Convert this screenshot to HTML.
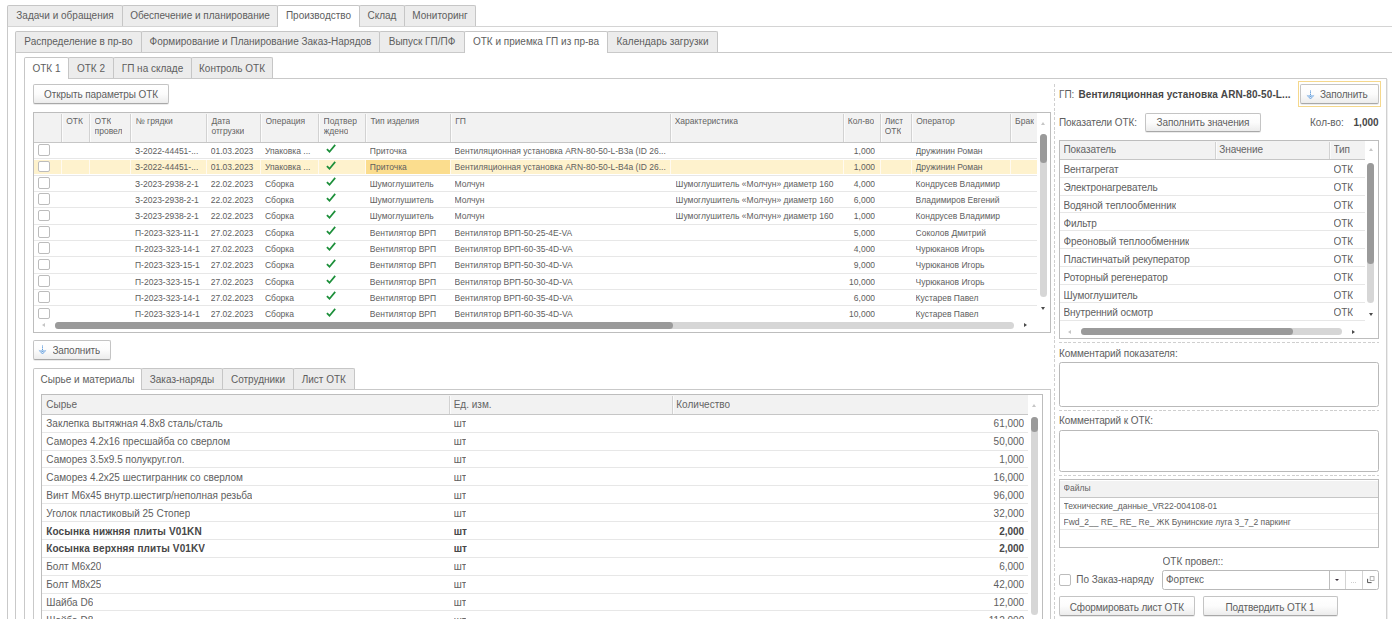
<!DOCTYPE html><html lang="ru"><head><meta charset="utf-8"><title>ОТК</title><style>
*{box-sizing:border-box;margin:0;padding:0}
html,body{width:1392px;height:619px;overflow:hidden;background:#fff}
body{font-family:"Liberation Sans",sans-serif;font-size:10px;color:#5e5e5e;position:relative}
.a{position:absolute}
.t{position:absolute;white-space:nowrap;line-height:12px;height:12px;overflow:hidden}
.s{font-size:8.5px}
.b{font-weight:bold;color:#474747}
.h{color:#646464}
.ln{position:absolute;background:#c9c9c9}
.tab{position:absolute;border:1px solid #c6c6c6;border-bottom:none;background:#ececec;border-radius:2px 2px 0 0}
.tab.act{background:#fff}
.btn{position:absolute;border:1px solid #c4c4c4;border-bottom-color:#a8a8a8;border-radius:2px;background:linear-gradient(#ffffff 0%,#fcfcfc 50%,#ececec 100%);box-shadow:0 1px 0 rgba(0,0,0,.08)}
.tbl{position:absolute;border:1px solid #bdbdbd;background:#fff}
.hd{position:absolute;background:#f2f2f2}
.vd{position:absolute;width:1px;background:#d2d2d2;box-shadow:1px 0 0 #fbfbfb}
.rl{position:absolute;height:1px;background:#e7e7e7}
.cb{position:absolute;border:1px solid #bcbcbc;border-radius:2px;background:#fff}
.dash-h{position:absolute;height:1px;background:repeating-linear-gradient(90deg,#cfcfcf 0,#cfcfcf 2.8px,transparent 2.8px,transparent 4.75px)}
.dash-v{position:absolute;width:1px;background:repeating-linear-gradient(180deg,#cfcfcf 0,#cfcfcf 2.8px,transparent 2.8px,transparent 4.75px)}
.ta{position:absolute;border:1px solid #b9b9b9;border-radius:2.5px;background:#fff}
.sb{position:absolute;border-radius:4px}
</style></head><body>
<div class="ln" style="left:7px;top:26px;width:1385px;height:1px;background:#d4d4d4"></div>
<div class="ln" style="left:7px;top:26px;width:1px;height:593px;background:#c9c9c9"></div>
<div class="tab" style="left:7.00px;top:5.00px;width:116.00px;height:21.00px;"></div>
<div class="tab" style="left:122.00px;top:5.00px;width:156.00px;height:21.00px;"></div>
<div class="tab act" style="left:277.00px;top:5.00px;width:83.00px;height:22.00px;z-index:2;"></div>
<div class="tab" style="left:359.00px;top:5.00px;width:46.00px;height:21.00px;"></div>
<div class="tab" style="left:404.00px;top:5.00px;width:72.00px;height:21.00px;"></div>
<div class="t" style="top:9.75px;left:7.50px;width:115.00px;text-align:center;z-index:3;">Задачи и обращения</div>
<div class="t" style="top:9.75px;left:122.50px;width:155.00px;text-align:center;z-index:3;">Обеспечение и планирование</div>
<div class="t" style="top:9.75px;left:277.50px;width:82.00px;text-align:center;z-index:3;">Производство</div>
<div class="t" style="top:9.75px;left:359.50px;width:45.00px;text-align:center;z-index:3;">Склад</div>
<div class="t" style="top:9.75px;left:404.50px;width:71.00px;text-align:center;z-index:3;">Мониторинг</div>
<div class="ln" style="left:15px;top:52px;width:1377px;height:1px;background:#c9c9c9"></div>
<div class="ln" style="left:15px;top:52px;width:1px;height:567px;background:#c9c9c9"></div>
<div class="tab" style="left:15.00px;top:31.00px;width:127.00px;height:21.00px;"></div>
<div class="tab" style="left:141.00px;top:31.00px;width:239.00px;height:21.00px;"></div>
<div class="tab" style="left:379.00px;top:31.00px;width:86.00px;height:21.00px;"></div>
<div class="tab act" style="left:464.00px;top:31.00px;width:144.00px;height:22.00px;z-index:2;"></div>
<div class="tab" style="left:607.00px;top:31.00px;width:111.00px;height:21.00px;"></div>
<div class="t" style="top:35.75px;left:15.50px;width:126.00px;text-align:center;z-index:3;">Распределение в пр-во</div>
<div class="t" style="top:35.75px;left:141.50px;width:238.00px;text-align:center;z-index:3;">Формирование и Планирование Заказ-Нарядов</div>
<div class="t" style="top:35.75px;left:379.50px;width:85.00px;text-align:center;z-index:3;">Выпуск ГП/ПФ</div>
<div class="t" style="top:35.75px;left:464.50px;width:143.00px;text-align:center;z-index:3;">ОТК и приемка ГП из пр-ва</div>
<div class="t" style="top:35.75px;left:607.50px;width:110.00px;text-align:center;z-index:3;">Календарь загрузки</div>
<div class="ln" style="left:24px;top:78px;width:1363px;height:1px;background:#c9c9c9"></div>
<div class="ln" style="left:24px;top:78px;width:1px;height:541px;background:#c9c9c9"></div>
<div class="ln" style="left:1386px;top:78px;width:1px;height:541px;background:#d0d0d0"></div>
<div class="ln" style="left:1387px;top:79px;width:1px;height:540px;background:#ededed"></div>
<div class="tab act" style="left:24.00px;top:57.00px;width:45.00px;height:22.00px;z-index:2;"></div>
<div class="tab" style="left:68.00px;top:57.00px;width:46.00px;height:21.00px;"></div>
<div class="tab" style="left:113.00px;top:57.00px;width:79.00px;height:21.00px;"></div>
<div class="tab" style="left:191.00px;top:57.00px;width:82.00px;height:21.00px;"></div>
<div class="t" style="top:62.75px;left:24.50px;width:44.00px;text-align:center;z-index:3;">ОТК 1</div>
<div class="t" style="top:62.75px;left:68.50px;width:45.00px;text-align:center;z-index:3;">ОТК 2</div>
<div class="t" style="top:62.75px;left:113.50px;width:78.00px;text-align:center;z-index:3;">ГП на складе</div>
<div class="t" style="top:62.75px;left:191.50px;width:81.00px;text-align:center;z-index:3;">Контроль ОТК</div>
<div class="btn" style="left:33.00px;top:84.40px;width:136.00px;height:19.60px;"></div>
<div class="t" style="top:88.75px;left:-49.00px;width:300.00px;text-align:center;letter-spacing:-0.1px;">Открыть параметры ОТК</div>
<div class="tbl" style="left:33.00px;top:112.00px;width:1018.00px;height:221.00px;"></div>
<div class="hd" style="left:34.00px;top:113.00px;width:1003.40px;height:29.40px;"></div>
<div class="ln" style="left:34px;top:142px;width:1003.4000000000001px;height:1px;background:#c6c6c6"></div>
<div class="vd" style="left:61.00px;top:114.00px;width:1.00px;height:27.90px;"></div>
<div class="t s h" style="top:115.25px;left:66.20px;">ОТК</div>
<div class="vd" style="left:89.40px;top:114.00px;width:1.00px;height:27.90px;"></div>
<div class="t s h" style="top:115.25px;left:94.60px;">ОТК</div>
<div class="t s h" style="top:125.25px;left:94.60px;">провел</div>
<div class="vd" style="left:130.40px;top:114.00px;width:1.00px;height:27.90px;"></div>
<div class="t s h" style="top:115.25px;left:135.60px;">№ грядки</div>
<div class="vd" style="left:206.20px;top:114.00px;width:1.00px;height:27.90px;"></div>
<div class="t s h" style="top:115.25px;left:211.40px;">Дата</div>
<div class="t s h" style="top:125.25px;left:211.40px;">отгрузки</div>
<div class="vd" style="left:260.30px;top:114.00px;width:1.00px;height:27.90px;"></div>
<div class="t s h" style="top:115.25px;left:265.50px;">Операция</div>
<div class="vd" style="left:318.40px;top:114.00px;width:1.00px;height:27.90px;"></div>
<div class="t s h" style="top:115.25px;left:323.60px;">Подтвер</div>
<div class="t s h" style="top:125.25px;left:323.60px;">ждено</div>
<div class="vd" style="left:365.20px;top:114.00px;width:1.00px;height:27.90px;"></div>
<div class="t s h" style="top:115.25px;left:370.40px;">Тип изделия</div>
<div class="vd" style="left:450.00px;top:114.00px;width:1.00px;height:27.90px;"></div>
<div class="t s h" style="top:115.25px;left:455.20px;">ГП</div>
<div class="vd" style="left:669.50px;top:114.00px;width:1.00px;height:27.90px;"></div>
<div class="t s h" style="top:115.25px;left:674.70px;">Характеристика</div>
<div class="vd" style="left:842.50px;top:114.00px;width:1.00px;height:27.90px;"></div>
<div class="t s h" style="top:115.25px;left:847.70px;">Кол-во</div>
<div class="vd" style="left:879.50px;top:114.00px;width:1.00px;height:27.90px;"></div>
<div class="t s h" style="top:115.25px;left:884.70px;">Лист</div>
<div class="t s h" style="top:125.25px;left:884.70px;">ОТК</div>
<div class="vd" style="left:911.00px;top:114.00px;width:1.00px;height:27.90px;"></div>
<div class="t s h" style="top:115.25px;left:916.20px;">Оператор</div>
<div class="vd" style="left:1009.90px;top:114.00px;width:1.00px;height:27.90px;"></div>
<div class="t s h" style="top:115.25px;left:1015.10px;">Брак</div>
<div class="rl" style="left:34px;top:158px;width:1003.4px"></div>
<div class="cb" style="left:38.00px;top:144.26px;width:12.00px;height:11.90px;"></div>
<div class="t s" style="top:145.25px;left:135.00px;width:70.30px;">З-2022-44451-...</div>
<div class="t s" style="top:145.25px;left:210.80px;width:48.60px;">01.03.2023</div>
<div class="t s" style="top:145.25px;left:264.90px;width:52.60px;">Упаковка ...</div>
<div class="t s" style="top:145.25px;left:369.80px;width:79.30px;">Приточка</div>
<div class="t s" style="top:145.25px;left:454.60px;width:214.00px;">Вентиляционная установка ARN-80-50-L-B3a (ID 26...</div>
<div class="t s" style="top:145.25px;left:843.10px;width:32.00px;text-align:right;">1,000</div>
<div class="t s" style="top:145.25px;left:915.60px;width:93.40px;">Дружинин Роман</div>
<svg class="a" style="left:325.60px;top:144.26px" width="10" height="9" viewBox="0 0 10 9"><path d="M0.9 5.1 L3.5 7.7 L9.2 0.9" fill="none" stroke="#1c8f3a" stroke-width="1.7"/></svg>
<div class="a" style="left:34.00px;top:160.00px;width:1003.40px;height:14.00px;background:#fef2cd;"></div>
<div class="a" style="left:61.00px;top:160.00px;width:1.00px;height:14.00px;background:#fffaf0;"></div>
<div class="a" style="left:89.40px;top:160.00px;width:1.00px;height:14.00px;background:#fffaf0;"></div>
<div class="a" style="left:130.40px;top:160.00px;width:1.00px;height:14.00px;background:#fffaf0;"></div>
<div class="a" style="left:206.20px;top:160.00px;width:1.00px;height:14.00px;background:#fffaf0;"></div>
<div class="a" style="left:260.30px;top:160.00px;width:1.00px;height:14.00px;background:#fffaf0;"></div>
<div class="a" style="left:318.40px;top:160.00px;width:1.00px;height:14.00px;background:#fffaf0;"></div>
<div class="a" style="left:365.20px;top:160.00px;width:1.00px;height:14.00px;background:#fffaf0;"></div>
<div class="a" style="left:450.00px;top:160.00px;width:1.00px;height:14.00px;background:#fffaf0;"></div>
<div class="a" style="left:669.50px;top:160.00px;width:1.00px;height:14.00px;background:#fffaf0;"></div>
<div class="a" style="left:842.50px;top:160.00px;width:1.00px;height:14.00px;background:#fffaf0;"></div>
<div class="a" style="left:879.50px;top:160.00px;width:1.00px;height:14.00px;background:#fffaf0;"></div>
<div class="a" style="left:911.00px;top:160.00px;width:1.00px;height:14.00px;background:#fffaf0;"></div>
<div class="a" style="left:1009.90px;top:160.00px;width:1.00px;height:14.00px;background:#fffaf0;"></div>
<div class="a" style="left:366.20px;top:160.00px;width:83.80px;height:14.00px;background:#fbdd8e;"></div>
<div class="rl" style="left:34px;top:175px;width:1003.4px"></div>
<div class="cb" style="left:38.00px;top:160.59px;width:12.00px;height:11.90px;"></div>
<div class="t s" style="top:161.25px;left:135.00px;width:70.30px;">З-2022-44451-...</div>
<div class="t s" style="top:161.25px;left:210.80px;width:48.60px;">01.03.2023</div>
<div class="t s" style="top:161.25px;left:264.90px;width:52.60px;">Упаковка ...</div>
<div class="t s" style="top:161.25px;left:369.80px;width:79.30px;">Приточка</div>
<div class="t s" style="top:161.25px;left:454.60px;width:214.00px;">Вентиляционная установка ARN-80-50-L-B4a (ID 26...</div>
<div class="t s" style="top:161.25px;left:843.10px;width:32.00px;text-align:right;">1,000</div>
<div class="t s" style="top:161.25px;left:915.60px;width:93.40px;">Дружинин Роман</div>
<svg class="a" style="left:325.60px;top:160.59px" width="10" height="9" viewBox="0 0 10 9"><path d="M0.9 5.1 L3.5 7.7 L9.2 0.9" fill="none" stroke="#1c8f3a" stroke-width="1.7"/></svg>
<div class="rl" style="left:34px;top:191px;width:1003.4px"></div>
<div class="cb" style="left:38.00px;top:176.92px;width:12.00px;height:11.90px;"></div>
<div class="t s" style="top:178.25px;left:135.00px;width:70.30px;">З-2023-2938-2-1</div>
<div class="t s" style="top:178.25px;left:210.80px;width:48.60px;">22.02.2023</div>
<div class="t s" style="top:178.25px;left:264.90px;width:52.60px;">Сборка</div>
<div class="t s" style="top:178.25px;left:369.80px;width:79.30px;">Шумоглушитель</div>
<div class="t s" style="top:178.25px;left:454.60px;width:214.00px;">Молчун</div>
<div class="t s" style="top:178.25px;left:675.60px;width:167.50px;">Шумоглушитель «Молчун» диаметр 160</div>
<div class="t s" style="top:178.25px;left:843.10px;width:32.00px;text-align:right;">4,000</div>
<div class="t s" style="top:178.25px;left:915.60px;width:93.40px;">Кондрусев Владимир</div>
<svg class="a" style="left:325.60px;top:176.92px" width="10" height="9" viewBox="0 0 10 9"><path d="M0.9 5.1 L3.5 7.7 L9.2 0.9" fill="none" stroke="#1c8f3a" stroke-width="1.7"/></svg>
<div class="rl" style="left:34px;top:207px;width:1003.4px"></div>
<div class="cb" style="left:38.00px;top:193.25px;width:12.00px;height:11.90px;"></div>
<div class="t s" style="top:194.25px;left:135.00px;width:70.30px;">З-2023-2938-2-1</div>
<div class="t s" style="top:194.25px;left:210.80px;width:48.60px;">22.02.2023</div>
<div class="t s" style="top:194.25px;left:264.90px;width:52.60px;">Сборка</div>
<div class="t s" style="top:194.25px;left:369.80px;width:79.30px;">Шумоглушитель</div>
<div class="t s" style="top:194.25px;left:454.60px;width:214.00px;">Молчун</div>
<div class="t s" style="top:194.25px;left:675.60px;width:167.50px;">Шумоглушитель «Молчун» диаметр 160</div>
<div class="t s" style="top:194.25px;left:843.10px;width:32.00px;text-align:right;">6,000</div>
<div class="t s" style="top:194.25px;left:915.60px;width:93.40px;">Владимиров Евгений</div>
<svg class="a" style="left:325.60px;top:193.25px" width="10" height="9" viewBox="0 0 10 9"><path d="M0.9 5.1 L3.5 7.7 L9.2 0.9" fill="none" stroke="#1c8f3a" stroke-width="1.7"/></svg>
<div class="rl" style="left:34px;top:224px;width:1003.4px"></div>
<div class="cb" style="left:38.00px;top:209.58px;width:12.00px;height:11.90px;"></div>
<div class="t s" style="top:210.25px;left:135.00px;width:70.30px;">З-2023-2938-2-1</div>
<div class="t s" style="top:210.25px;left:210.80px;width:48.60px;">22.02.2023</div>
<div class="t s" style="top:210.25px;left:264.90px;width:52.60px;">Сборка</div>
<div class="t s" style="top:210.25px;left:369.80px;width:79.30px;">Шумоглушитель</div>
<div class="t s" style="top:210.25px;left:454.60px;width:214.00px;">Молчун</div>
<div class="t s" style="top:210.25px;left:675.60px;width:167.50px;">Шумоглушитель «Молчун» диаметр 160</div>
<div class="t s" style="top:210.25px;left:843.10px;width:32.00px;text-align:right;">1,000</div>
<div class="t s" style="top:210.25px;left:915.60px;width:93.40px;">Кондрусев Владимир</div>
<svg class="a" style="left:325.60px;top:209.58px" width="10" height="9" viewBox="0 0 10 9"><path d="M0.9 5.1 L3.5 7.7 L9.2 0.9" fill="none" stroke="#1c8f3a" stroke-width="1.7"/></svg>
<div class="rl" style="left:34px;top:240px;width:1003.4px"></div>
<div class="cb" style="left:38.00px;top:225.91px;width:12.00px;height:11.90px;"></div>
<div class="t s" style="top:227.25px;left:135.00px;width:70.30px;">П-2023-323-11-1</div>
<div class="t s" style="top:227.25px;left:210.80px;width:48.60px;">27.02.2023</div>
<div class="t s" style="top:227.25px;left:264.90px;width:52.60px;">Сборка</div>
<div class="t s" style="top:227.25px;left:369.80px;width:79.30px;">Вентилятор ВРП</div>
<div class="t s" style="top:227.25px;left:454.60px;width:214.00px;">Вентилятор ВРП-50-25-4E-VA</div>
<div class="t s" style="top:227.25px;left:843.10px;width:32.00px;text-align:right;">5,000</div>
<div class="t s" style="top:227.25px;left:915.60px;width:93.40px;">Соколов Дмитрий</div>
<svg class="a" style="left:325.60px;top:225.91px" width="10" height="9" viewBox="0 0 10 9"><path d="M0.9 5.1 L3.5 7.7 L9.2 0.9" fill="none" stroke="#1c8f3a" stroke-width="1.7"/></svg>
<div class="rl" style="left:34px;top:256px;width:1003.4px"></div>
<div class="cb" style="left:38.00px;top:242.24px;width:12.00px;height:11.90px;"></div>
<div class="t s" style="top:243.25px;left:135.00px;width:70.30px;">П-2023-323-14-1</div>
<div class="t s" style="top:243.25px;left:210.80px;width:48.60px;">27.02.2023</div>
<div class="t s" style="top:243.25px;left:264.90px;width:52.60px;">Сборка</div>
<div class="t s" style="top:243.25px;left:369.80px;width:79.30px;">Вентилятор ВРП</div>
<div class="t s" style="top:243.25px;left:454.60px;width:214.00px;">Вентилятор ВРП-60-35-4D-VA</div>
<div class="t s" style="top:243.25px;left:843.10px;width:32.00px;text-align:right;">4,000</div>
<div class="t s" style="top:243.25px;left:915.60px;width:93.40px;">Чурюканов Игорь</div>
<svg class="a" style="left:325.60px;top:242.24px" width="10" height="9" viewBox="0 0 10 9"><path d="M0.9 5.1 L3.5 7.7 L9.2 0.9" fill="none" stroke="#1c8f3a" stroke-width="1.7"/></svg>
<div class="rl" style="left:34px;top:273px;width:1003.4px"></div>
<div class="cb" style="left:38.00px;top:258.57px;width:12.00px;height:11.90px;"></div>
<div class="t s" style="top:259.25px;left:135.00px;width:70.30px;">П-2023-323-15-1</div>
<div class="t s" style="top:259.25px;left:210.80px;width:48.60px;">27.02.2023</div>
<div class="t s" style="top:259.25px;left:264.90px;width:52.60px;">Сборка</div>
<div class="t s" style="top:259.25px;left:369.80px;width:79.30px;">Вентилятор ВРП</div>
<div class="t s" style="top:259.25px;left:454.60px;width:214.00px;">Вентилятор ВРП-50-30-4D-VA</div>
<div class="t s" style="top:259.25px;left:843.10px;width:32.00px;text-align:right;">9,000</div>
<div class="t s" style="top:259.25px;left:915.60px;width:93.40px;">Чурюканов Игорь</div>
<svg class="a" style="left:325.60px;top:258.57px" width="10" height="9" viewBox="0 0 10 9"><path d="M0.9 5.1 L3.5 7.7 L9.2 0.9" fill="none" stroke="#1c8f3a" stroke-width="1.7"/></svg>
<div class="rl" style="left:34px;top:289px;width:1003.4px"></div>
<div class="cb" style="left:38.00px;top:274.90px;width:12.00px;height:11.90px;"></div>
<div class="t s" style="top:276.25px;left:135.00px;width:70.30px;">П-2023-323-15-1</div>
<div class="t s" style="top:276.25px;left:210.80px;width:48.60px;">27.02.2023</div>
<div class="t s" style="top:276.25px;left:264.90px;width:52.60px;">Сборка</div>
<div class="t s" style="top:276.25px;left:369.80px;width:79.30px;">Вентилятор ВРП</div>
<div class="t s" style="top:276.25px;left:454.60px;width:214.00px;">Вентилятор ВРП-50-30-4D-VA</div>
<div class="t s" style="top:276.25px;left:843.10px;width:32.00px;text-align:right;">10,000</div>
<div class="t s" style="top:276.25px;left:915.60px;width:93.40px;">Чурюканов Игорь</div>
<svg class="a" style="left:325.60px;top:274.90px" width="10" height="9" viewBox="0 0 10 9"><path d="M0.9 5.1 L3.5 7.7 L9.2 0.9" fill="none" stroke="#1c8f3a" stroke-width="1.7"/></svg>
<div class="rl" style="left:34px;top:305px;width:1003.4px"></div>
<div class="cb" style="left:38.00px;top:291.23px;width:12.00px;height:11.90px;"></div>
<div class="t s" style="top:292.25px;left:135.00px;width:70.30px;">П-2023-323-14-1</div>
<div class="t s" style="top:292.25px;left:210.80px;width:48.60px;">27.02.2023</div>
<div class="t s" style="top:292.25px;left:264.90px;width:52.60px;">Сборка</div>
<div class="t s" style="top:292.25px;left:369.80px;width:79.30px;">Вентилятор ВРП</div>
<div class="t s" style="top:292.25px;left:454.60px;width:214.00px;">Вентилятор ВРП-60-35-4D-VA</div>
<div class="t s" style="top:292.25px;left:843.10px;width:32.00px;text-align:right;">6,000</div>
<div class="t s" style="top:292.25px;left:915.60px;width:93.40px;">Кустарев Павел</div>
<svg class="a" style="left:325.60px;top:291.23px" width="10" height="9" viewBox="0 0 10 9"><path d="M0.9 5.1 L3.5 7.7 L9.2 0.9" fill="none" stroke="#1c8f3a" stroke-width="1.7"/></svg>
<div class="cb" style="left:38.00px;top:307.56px;width:12.00px;height:11.90px;"></div>
<div class="t s" style="top:308.25px;left:135.00px;width:70.30px;">П-2023-323-14-1</div>
<div class="t s" style="top:308.25px;left:210.80px;width:48.60px;">27.02.2023</div>
<div class="t s" style="top:308.25px;left:264.90px;width:52.60px;">Сборка</div>
<div class="t s" style="top:308.25px;left:369.80px;width:79.30px;">Вентилятор ВРП</div>
<div class="t s" style="top:308.25px;left:454.60px;width:214.00px;">Вентилятор ВРП-60-35-4D-VA</div>
<div class="t s" style="top:308.25px;left:843.10px;width:32.00px;text-align:right;">10,000</div>
<div class="t s" style="top:308.25px;left:915.60px;width:93.40px;">Кустарев Павел</div>
<svg class="a" style="left:325.60px;top:307.56px" width="10" height="9" viewBox="0 0 10 9"><path d="M0.9 5.1 L3.5 7.7 L9.2 0.9" fill="none" stroke="#1c8f3a" stroke-width="1.7"/></svg>
<div class="a" style="left:1041.30px;top:121.50px;border-left:2.2px solid transparent;border-right:2.2px solid transparent;border-bottom:3.8px solid #c6c6c6"></div>
<div class="sb" style="left:1039.70px;top:134.30px;width:7.30px;height:162.70px;background:#d6d6d6"></div>
<div class="sb" style="left:1039.70px;top:134.30px;width:7.30px;height:28.70px;background:#9a9a9a"></div>
<div class="a" style="left:1041.30px;top:306.80px;border-left:2.2px solid transparent;border-right:2.2px solid transparent;border-top:3.8px solid #4a4a4a"></div>
<div class="sb" style="left:55.00px;top:321.70px;width:959.30px;height:7.10px;background:#d6d6d6"></div>
<div class="sb" style="left:55.00px;top:321.70px;width:617.50px;height:7.10px;background:#9a9a9a"></div>
<div class="a" style="left:42.10px;top:323.10px;border-top:2.2px solid transparent;border-bottom:2.2px solid transparent;border-right:3.8px solid #c6c6c6"></div>
<div class="a" style="left:1023.60px;top:323.10px;border-top:2.2px solid transparent;border-bottom:2.2px solid transparent;border-left:3.8px solid #4a4a4a"></div>
<div class="btn" style="left:33.00px;top:340.40px;width:78.00px;height:20.00px;"></div>
<svg class="a" style="left:38.00px;top:345.30px" width="9" height="10" viewBox="0 0 9 10"><path d="M4.5 0.5 V6.6" fill="none" stroke="#4a90d9" stroke-width="0.9" stroke-dasharray="1.1 0.6"/><path d="M2.6 5 L4.5 7.1 L6.4 5" fill="none" stroke="#4a90d9" stroke-width="0.85"/><path d="M0.9 5.4 Q2.8 6.6 4.5 9 Q6.2 6.6 8.1 5.4" fill="none" stroke="#5a9be0" stroke-width="0.8"/></svg>
<div class="t" style="top:344.75px;left:52.50px;letter-spacing:-0.17px;">Заполнить</div>
<div class="ln" style="left:33px;top:389px;width:1018px;height:1px;background:#c9c9c9"></div>
<div class="ln" style="left:33px;top:389px;width:1px;height:230px;background:#c9c9c9"></div>
<div class="ln" style="left:1050px;top:389px;width:1px;height:230px;background:#c9c9c9"></div>
<div class="tab act" style="left:33.00px;top:368.00px;width:109.00px;height:22.00px;z-index:2;"></div>
<div class="tab" style="left:141.00px;top:368.00px;width:82.00px;height:21.00px;"></div>
<div class="tab" style="left:222.00px;top:368.00px;width:72.00px;height:21.00px;"></div>
<div class="tab" style="left:293.00px;top:368.00px;width:61.50px;height:21.00px;"></div>
<div class="t" style="top:373.75px;left:33.50px;width:108.00px;text-align:center;z-index:3;">Сырье и материалы</div>
<div class="t" style="top:373.75px;left:141.50px;width:81.00px;text-align:center;z-index:3;">Заказ-наряды</div>
<div class="t" style="top:373.75px;left:222.50px;width:71.00px;text-align:center;z-index:3;">Сотрудники</div>
<div class="t" style="top:373.75px;left:293.50px;width:60.50px;text-align:center;z-index:3;">Лист ОТК</div>
<div class="tbl" style="left:41.00px;top:394.00px;width:1002.00px;height:246.00px;"></div>
<div class="hd" style="left:42.00px;top:395.00px;width:986.40px;height:19.30px;"></div>
<div class="ln" style="left:42px;top:414px;width:986.4000000000001px;height:1px;background:#c6c6c6"></div>
<div class="vd" style="left:449.25px;top:396.00px;width:1.00px;height:17.80px;"></div>
<div class="vd" style="left:671.75px;top:396.00px;width:1.00px;height:17.80px;"></div>
<div class="t h" style="top:398.75px;left:46.30px;">Сырье</div>
<div class="t h" style="top:398.75px;left:453.70px;">Ед. изм.</div>
<div class="t h" style="top:398.75px;left:676.30px;">Количество</div>
<div class="rl" style="left:42px;top:432px;width:986.4px"></div>
<div class="t" style="top:417.75px;left:46.30px;">Заклепка вытяжная 4.8х8 сталь/сталь</div>
<div class="t" style="top:417.75px;left:453.70px;">шт</div>
<div class="t" style="top:417.75px;left:904.20px;width:120.00px;text-align:right;">61,000</div>
<div class="rl" style="left:42px;top:450px;width:986.4px"></div>
<div class="t" style="top:435.75px;left:46.30px;">Саморез 4.2х16 пресшайба со сверлом</div>
<div class="t" style="top:435.75px;left:453.70px;">шт</div>
<div class="t" style="top:435.75px;left:904.20px;width:120.00px;text-align:right;">50,000</div>
<div class="rl" style="left:42px;top:467px;width:986.4px"></div>
<div class="t" style="top:453.75px;left:46.30px;">Саморез 3.5х9.5 полукруг.гол.</div>
<div class="t" style="top:453.75px;left:453.70px;">шт</div>
<div class="t" style="top:453.75px;left:904.20px;width:120.00px;text-align:right;">1,000</div>
<div class="rl" style="left:42px;top:485px;width:986.4px"></div>
<div class="t" style="top:471.75px;left:46.30px;">Саморез 4.2х25 шестигранник со сверлом</div>
<div class="t" style="top:471.75px;left:453.70px;">шт</div>
<div class="t" style="top:471.75px;left:904.20px;width:120.00px;text-align:right;">16,000</div>
<div class="rl" style="left:42px;top:503px;width:986.4px"></div>
<div class="t" style="top:489.75px;left:46.30px;">Винт М6х45 внутр.шестигр/неполная резьба</div>
<div class="t" style="top:489.75px;left:453.70px;">шт</div>
<div class="t" style="top:489.75px;left:904.20px;width:120.00px;text-align:right;">96,000</div>
<div class="rl" style="left:42px;top:521px;width:986.4px"></div>
<div class="t" style="top:507.75px;left:46.30px;">Уголок пластиковый 25 Стопер</div>
<div class="t" style="top:507.75px;left:453.70px;">шт</div>
<div class="t" style="top:507.75px;left:904.20px;width:120.00px;text-align:right;">32,000</div>
<div class="rl" style="left:42px;top:539px;width:986.4px"></div>
<div class="t b" style="top:525.75px;left:46.30px;letter-spacing:0.12px;">Косынка нижняя плиты V01KN</div>
<div class="t b" style="top:525.75px;left:453.70px;">шт</div>
<div class="t b" style="top:525.75px;left:904.20px;width:120.00px;text-align:right;">2,000</div>
<div class="rl" style="left:42px;top:557px;width:986.4px"></div>
<div class="t b" style="top:542.75px;left:46.30px;letter-spacing:0.12px;">Косынка верхняя плиты V01KV</div>
<div class="t b" style="top:542.75px;left:453.70px;">шт</div>
<div class="t b" style="top:542.75px;left:904.20px;width:120.00px;text-align:right;">2,000</div>
<div class="rl" style="left:42px;top:575px;width:986.4px"></div>
<div class="t" style="top:560.75px;left:46.30px;">Болт М6х20</div>
<div class="t" style="top:560.75px;left:453.70px;">шт</div>
<div class="t" style="top:560.75px;left:904.20px;width:120.00px;text-align:right;">6,000</div>
<div class="rl" style="left:42px;top:593px;width:986.4px"></div>
<div class="t" style="top:578.75px;left:46.30px;">Болт М8х25</div>
<div class="t" style="top:578.75px;left:453.70px;">шт</div>
<div class="t" style="top:578.75px;left:904.20px;width:120.00px;text-align:right;">42,000</div>
<div class="rl" style="left:42px;top:610px;width:986.4px"></div>
<div class="t" style="top:596.75px;left:46.30px;">Шайба D6</div>
<div class="t" style="top:596.75px;left:453.70px;">шт</div>
<div class="t" style="top:596.75px;left:904.20px;width:120.00px;text-align:right;">12,000</div>
<div class="rl" style="left:42px;top:628px;width:986.4px"></div>
<div class="t" style="top:614.75px;left:46.30px;">Шайба D8</div>
<div class="t" style="top:614.75px;left:453.70px;">шт</div>
<div class="t" style="top:614.75px;left:904.20px;width:120.00px;text-align:right;">112,000</div>
<div class="a" style="left:1032.00px;top:403.60px;border-left:2.2px solid transparent;border-right:2.2px solid transparent;border-bottom:3.8px solid #c6c6c6"></div>
<div class="sb" style="left:1030.80px;top:416.50px;width:6.80px;height:198.50px;background:#d6d6d6"></div>
<div class="sb" style="left:1030.80px;top:416.50px;width:6.80px;height:15.00px;background:#9a9a9a"></div>
<div class="dash-v" style="left:1054.00px;top:84.00px;width:1.00px;height:535.00px;"></div>
<div class="t" style="top:88.75px;left:1059.00px;">ГП:</div>
<div class="t b" style="top:88.75px;left:1078.40px;letter-spacing:0.11px;">Вентиляционная установка ARN-80-50-L...</div>
<div class="a" style="left:1298.00px;top:81.00px;width:83.00px;height:26.00px;border:1px solid #f5d88c;"></div>
<div class="btn" style="left:1300.00px;top:84.40px;width:79.00px;height:19.60px;"></div>
<svg class="a" style="left:1305.80px;top:89.50px" width="9" height="10" viewBox="0 0 9 10"><path d="M4.5 0.5 V6.6" fill="none" stroke="#4a90d9" stroke-width="0.9" stroke-dasharray="1.1 0.6"/><path d="M2.6 5 L4.5 7.1 L6.4 5" fill="none" stroke="#4a90d9" stroke-width="0.85"/><path d="M0.9 5.4 Q2.8 6.6 4.5 9 Q6.2 6.6 8.1 5.4" fill="none" stroke="#5a9be0" stroke-width="0.8"/></svg>
<div class="t" style="top:88.75px;left:1320.00px;letter-spacing:-0.17px;">Заполнить</div>
<div class="t" style="top:116.75px;left:1059.00px;letter-spacing:-0.08px;">Показатели ОТК:</div>
<div class="btn" style="left:1145.00px;top:112.50px;width:116.00px;height:19.30px;"></div>
<div class="t" style="top:116.75px;left:1053.00px;width:300.00px;text-align:center;letter-spacing:-0.1px;">Заполнить значения</div>
<div class="t" style="top:116.75px;left:1310.00px;">Кол-во:</div>
<div class="t b" style="top:116.75px;left:1258.60px;width:120.00px;text-align:right;">1,000</div>
<div class="tbl" style="left:1059.00px;top:140.00px;width:320.00px;height:199.00px;"></div>
<div class="hd" style="left:1060.00px;top:141.00px;width:304.80px;height:18.20px;"></div>
<div class="ln" style="left:1060px;top:159px;width:304.79999999999995px;height:1px;background:#c6c6c6"></div>
<div class="vd" style="left:1215.00px;top:142.00px;width:1.00px;height:16.70px;"></div>
<div class="vd" style="left:1329.00px;top:142.00px;width:1.00px;height:16.70px;"></div>
<div class="t h" style="top:143.75px;left:1063.50px;letter-spacing:-0.08px;">Показатель</div>
<div class="t h" style="top:143.75px;left:1219.30px;letter-spacing:-0.08px;">Значение</div>
<div class="t h" style="top:143.75px;left:1333.50px;letter-spacing:-0.08px;">Тип</div>
<div class="rl" style="left:1060px;top:177px;width:304.8px"></div>
<div class="t" style="top:163.75px;left:1063.50px;letter-spacing:-0.08px;">Вентагрегат</div>
<div class="t" style="top:163.75px;left:1333.50px;letter-spacing:-0.08px;">ОТК</div>
<div class="rl" style="left:1060px;top:195px;width:304.8px"></div>
<div class="t" style="top:181.75px;left:1063.50px;letter-spacing:-0.08px;">Электронагреватель</div>
<div class="t" style="top:181.75px;left:1333.50px;letter-spacing:-0.08px;">ОТК</div>
<div class="rl" style="left:1060px;top:212px;width:304.8px"></div>
<div class="t" style="top:199.75px;left:1063.50px;letter-spacing:-0.08px;">Водяной теплообменник</div>
<div class="t" style="top:199.75px;left:1333.50px;letter-spacing:-0.08px;">ОТК</div>
<div class="rl" style="left:1060px;top:230px;width:304.8px"></div>
<div class="t" style="top:217.75px;left:1063.50px;letter-spacing:-0.08px;">Фильтр</div>
<div class="t" style="top:217.75px;left:1333.50px;letter-spacing:-0.08px;">ОТК</div>
<div class="rl" style="left:1060px;top:248px;width:304.8px"></div>
<div class="t" style="top:235.75px;left:1063.50px;letter-spacing:-0.08px;">Фреоновый теплообменник</div>
<div class="t" style="top:235.75px;left:1333.50px;letter-spacing:-0.08px;">ОТК</div>
<div class="rl" style="left:1060px;top:266px;width:304.8px"></div>
<div class="t" style="top:253.75px;left:1063.50px;letter-spacing:-0.08px;">Пластинчатый рекуператор</div>
<div class="t" style="top:253.75px;left:1333.50px;letter-spacing:-0.08px;">ОТК</div>
<div class="rl" style="left:1060px;top:284px;width:304.8px"></div>
<div class="t" style="top:271.75px;left:1063.50px;letter-spacing:-0.08px;">Роторный регенератор</div>
<div class="t" style="top:271.75px;left:1333.50px;letter-spacing:-0.08px;">ОТК</div>
<div class="rl" style="left:1060px;top:302px;width:304.8px"></div>
<div class="t" style="top:289.75px;left:1063.50px;letter-spacing:-0.08px;">Шумоглушитель</div>
<div class="t" style="top:289.75px;left:1333.50px;letter-spacing:-0.08px;">ОТК</div>
<div class="rl" style="left:1060px;top:320px;width:304.8px"></div>
<div class="t" style="top:306.75px;left:1063.50px;letter-spacing:-0.08px;">Внутренний осмотр</div>
<div class="t" style="top:306.75px;left:1333.50px;letter-spacing:-0.08px;">ОТК</div>
<div class="a" style="left:1369.10px;top:148.10px;border-left:2.2px solid transparent;border-right:2.2px solid transparent;border-bottom:3.8px solid #c6c6c6"></div>
<div class="sb" style="left:1367.30px;top:162.50px;width:6.90px;height:140.20px;background:#d6d6d6"></div>
<div class="sb" style="left:1367.30px;top:162.50px;width:6.90px;height:101.90px;background:#9a9a9a"></div>
<div class="a" style="left:1369.10px;top:312.90px;border-left:2.2px solid transparent;border-right:2.2px solid transparent;border-top:3.8px solid #4a4a4a"></div>
<div class="sb" style="left:1081.00px;top:328.20px;width:261.40px;height:7.00px;background:#d6d6d6"></div>
<div class="sb" style="left:1081.00px;top:328.20px;width:212.40px;height:7.00px;background:#9a9a9a"></div>
<div class="a" style="left:1068.40px;top:329.80px;border-top:2.2px solid transparent;border-bottom:2.2px solid transparent;border-right:3.8px solid #c6c6c6"></div>
<div class="a" style="left:1352.20px;top:329.80px;border-top:2.2px solid transparent;border-bottom:2.2px solid transparent;border-left:3.8px solid #4a4a4a"></div>
<div class="dash-h" style="left:1059.00px;top:342.00px;width:320.00px;height:1.00px;"></div>
<div class="t" style="top:347.75px;left:1059.00px;letter-spacing:-0.08px;">Комментарий показателя:</div>
<div class="ta" style="left:1059.00px;top:362.40px;width:320.00px;height:44.20px;"></div>
<div class="dash-h" style="left:1059.00px;top:410.00px;width:320.00px;height:1.00px;"></div>
<div class="t" style="top:414.75px;left:1059.00px;letter-spacing:-0.08px;">Комментарий к ОТК:</div>
<div class="ta" style="left:1059.00px;top:429.60px;width:320.00px;height:42.20px;"></div>
<div class="dash-h" style="left:1059.00px;top:475.00px;width:320.00px;height:1.00px;"></div>
<div class="tbl" style="left:1059.00px;top:479.40px;width:320.00px;height:68.20px;"></div>
<div class="hd" style="left:1060.00px;top:480.50px;width:318.00px;height:17.00px;"></div>
<div class="ln" style="left:1060px;top:497px;width:318px;height:1px;background:#c6c6c6"></div>
<div class="t s h" style="top:482.25px;left:1063.50px;">Файлы</div>
<div class="rl" style="left:1060px;top:513px;width:318px"></div>
<div class="t s" style="top:500.25px;left:1063.50px;">Технические_данные_VR22-004108-01</div>
<div class="rl" style="left:1060px;top:529px;width:318px"></div>
<div class="t s" style="top:516.25px;left:1063.50px;">Fwd_2__ RE_ RE_ Re_ ЖК Бунинские луга 3_7_2 паркинг</div>
<div class="t" style="top:555.75px;left:1162.50px;">ОТК провел::</div>
<div class="cb" style="left:1059.30px;top:574.30px;width:11.60px;height:11.50px;"></div>
<div class="t" style="top:573.75px;left:1076.20px;">По Заказ-наряду</div>
<div class="ta" style="left:1162.20px;top:570.30px;width:216.80px;height:19.30px;"></div>
<div class="t" style="top:573.75px;left:1166.00px;">Фортекс</div>
<div class="a" style="left:1329.00px;top:571.30px;width:1.00px;height:17.30px;background:#bdbdbd;"></div>
<div class="a" style="left:1345.30px;top:571.30px;width:1.00px;height:17.30px;background:#d4d4d4;"></div>
<div class="a" style="left:1362.20px;top:571.30px;width:1.00px;height:17.30px;background:#d4d4d4;"></div>
<div class="a" style="left:1335.20px;top:578.50px;border-left:2px solid transparent;border-right:2px solid transparent;border-top:2.4px solid #3a2f3a"></div>
<div class="a" style="left:1351.00px;top:582.10px;width:1.00px;height:1.30px;background:#cfcfcf;"></div>
<div class="a" style="left:1353.10px;top:582.10px;width:1.00px;height:1.30px;background:#cfcfcf;"></div>
<div class="a" style="left:1355.20px;top:582.10px;width:1.00px;height:1.30px;background:#cfcfcf;"></div>
<svg class="a" style="left:1366px;top:575px" width="10" height="9" viewBox="0 0 10 9"><rect x="4.2" y="1.6" width="3.8" height="3.9" fill="#fff" stroke="#a8a8a8" stroke-width="0.9"/><path d="M1.6 3.8 V7.6 H5.6" fill="none" stroke="#555" stroke-width="1"/></svg>
<div class="btn" style="left:1059.40px;top:596.40px;width:135.40px;height:20.00px;"></div>
<div class="t" style="top:601.75px;left:976.80px;width:300.00px;text-align:center;letter-spacing:-0.12px;">Сформировать лист ОТК</div>
<div class="btn" style="left:1202.50px;top:596.40px;width:135.50px;height:20.00px;"></div>
<div class="t" style="top:601.75px;left:1120.00px;width:300.00px;text-align:center;letter-spacing:-0.12px;">Подтвердить ОТК 1</div>
</body></html>
